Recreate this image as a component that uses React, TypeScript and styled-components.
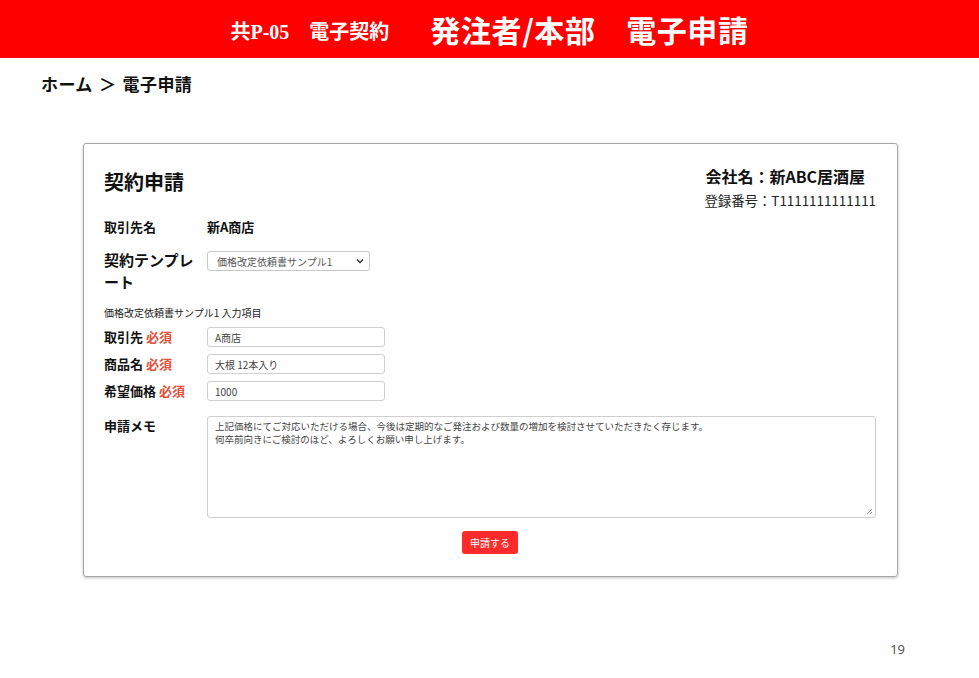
import React from 'react';
import styled, { createGlobalStyle } from 'styled-components';

const GlobalStyle = createGlobalStyle`
  html, body {
    margin: 0;
    padding: 0;
    background: #ffffff;
  }
  body {
    font-family: 'Noto Sans CJK JP', 'Noto Sans', sans-serif;
    color: #222;
  }
`;

const Page = styled.div`
  width: 979px;
  height: 678px;
  display: flex;
  flex-direction: column;
  position: relative;
  overflow: hidden;
`;

const Banner = styled.header`
  height: 58px;
  background: #ff0000;
  display: flex;
  align-items: center;
  justify-content: center;
  color: #fff;
`;

const BannerSmall = styled.span`
  font-family: 'Liberation Serif', 'Noto Sans CJK JP', serif;
  font-weight: 700;
  font-size: 20px;
  margin-right: 41px;
  white-space: pre;
  margin-top: 2px;
`;

const BannerLarge = styled.span`
  font-family: 'Noto Sans CJK JP', sans-serif;
  font-weight: 700;
  font-size: 30px;
  letter-spacing: 0.6px;
  white-space: pre;
`;

const Crumbs = styled.nav`
  margin: 14px 0 0 41px;
  font-size: 17px;
  font-weight: 700;
  color: #111;
  line-height: 24px;
  letter-spacing: 0.4px;
  word-spacing: 2px;
`;

const Card = styled.section`
  margin: 47px 0 0 83px;
  width: 815px;
  height: 434px;
  box-sizing: border-box;
  border: 1px solid #a8a8a8;
  border-radius: 3px;
  box-shadow: 0 1px 3px rgba(0, 0, 0, 0.25);
  padding: 18px 21px 0 20px;
  display: flex;
  flex-direction: column;
`;

const CardHead = styled.div`
  display: flex;
  justify-content: space-between;
  align-items: flex-start;
`;

const Title = styled.h2`
  margin: 6px 0 0;
  font-size: 20px;
  font-weight: 700;
  line-height: 28px;
  color: #111;
`;

const Company = styled.div`
  text-align: left;
  padding-top: 3px;
`;

const CompanyName = styled.div`
  font-size: 16px;
  font-weight: 700;
  line-height: 22px;
  color: #111;
  padding-left: 1px;
`;

const RegNo = styled.div`
  font-size: 13.4px;
  line-height: 18px;
  margin-top: 4px;
  color: #222;
`;

const Row = styled.div<{ $top?: number }>`
  display: flex;
  align-items: flex-start;
  margin-top: ${({ $top }) => $top ?? 0}px;
`;

const Label = styled.div<{ $size?: number }>`
  width: 103px;
  flex: none;
  font-size: ${({ $size }) => $size ?? 13}px;
  font-weight: 700;
  line-height: ${({ $size }) => ($size ?? 13) + 7}px;
  color: #111;
`;

const Required = styled.span`
  color: #e0503a;
  margin-left: 3px;
`;

const Value = styled.div`
  font-size: 13px;
  font-weight: 700;
  line-height: 20px;
  color: #111;
`;

const Select = styled.div`
  width: 163px;
  height: 20px;
  box-sizing: border-box;
  border: 1px solid #c9c9c9;
  border-radius: 3px;
  font-size: 10px;
  color: #555;
  display: flex;
  align-items: center;
  justify-content: space-between;
  padding: 0 5px 0 9px;
  margin-top: 2px;
`;

const Caption = styled.div`
  font-size: 10px;
  line-height: 14px;
  color: #222;
`;

const Field = styled.div`
  width: 178px;
  height: 20px;
  box-sizing: border-box;
  border: 1px solid #cfcfcf;
  border-radius: 3px;
  font-size: 10px;
  color: #444;
  padding: 0 7px;
  display: flex;
  align-items: center;
`;

const Memo = styled.div`
  flex: 1;
  height: 102px;
  box-sizing: border-box;
  border: 1px solid #cfcfcf;
  border-radius: 3px;
  font-size: 9.5px;
  line-height: 13px;
  color: #444;
  padding: 3px 7px;
  position: relative;
`;

const Grip = styled.svg`
  position: absolute;
  right: 2px;
  bottom: 2px;
`;

const Actions = styled.div`
  display: flex;
  justify-content: center;
  margin-top: 13px;
`;

const Submit = styled.button`
  width: 56px;
  height: 23px;
  border: none;
  border-radius: 3px;
  background: #ff2a2a;
  color: #fff;
  font-family: 'Noto Sans CJK JP', sans-serif;
  font-size: 10px;
  padding: 0;
`;

const PageNo = styled.div`
  position: absolute;
  right: 74px;
  bottom: 20px;
  font-family: 'Noto Sans', sans-serif;
  font-size: 13px;
  color: #555;
`;

export default function App() {
  return (
    <Page>
      <GlobalStyle />
      <Banner>
        <BannerSmall>共P-05　電子契約</BannerSmall>
        <BannerLarge>発注者/本部　電子申請</BannerLarge>
      </Banner>
      <Crumbs>ホーム ＞ 電子申請</Crumbs>
      <Card>
        <CardHead>
          <Title>契約申請</Title>
          <Company>
            <CompanyName>会社名：新ABC居酒屋</CompanyName>
            <RegNo>登録番号：T1111111111111</RegNo>
          </Company>
        </CardHead>
        <Row $top={8}>
          <Label>取引先名</Label>
          <Value>新A商店</Value>
        </Row>
        <Row $top={12}>
          <Label $size={15}>契約テンプレート</Label>
          <Select>
            <span>価格改定依頼書サンプル1</span>
            <svg width="8" height="6" viewBox="0 0 8 6">
              <path d="M1 1.5 4 4.5 7 1.5" fill="none" stroke="#333" strokeWidth="1.4" />
            </svg>
          </Select>
        </Row>
        <Row $top={13}>
          <Caption>価格改定依頼書サンプル1 入力項目</Caption>
        </Row>
        <Row $top={7}>
          <Label>取引先<Required>必須</Required></Label>
          <Field>A商店</Field>
        </Row>
        <Row $top={7}>
          <Label>商品名<Required>必須</Required></Label>
          <Field>大根 12本入り</Field>
        </Row>
        <Row $top={7}>
          <Label>希望価格<Required>必須</Required></Label>
          <Field>1000</Field>
        </Row>
        <Row $top={15}>
          <Label>申請メモ</Label>
          <Memo>
            上記価格にてご対応いただける場合、今後は定期的なご発注および数量の増加を検討させていただきたく存じます。
            <br />
            何卒前向きにご検討のほど、よろしくお願い申し上げます。
            <Grip width="7" height="7" viewBox="0 0 7 7">
              <path d="M6 1 1 6M6 4 4 6" stroke="#888" strokeWidth="0.8" />
            </Grip>
          </Memo>
        </Row>
        <Actions>
          <Submit>申請する</Submit>
        </Actions>
      </Card>
      <PageNo>19</PageNo>
    </Page>
  );
}
